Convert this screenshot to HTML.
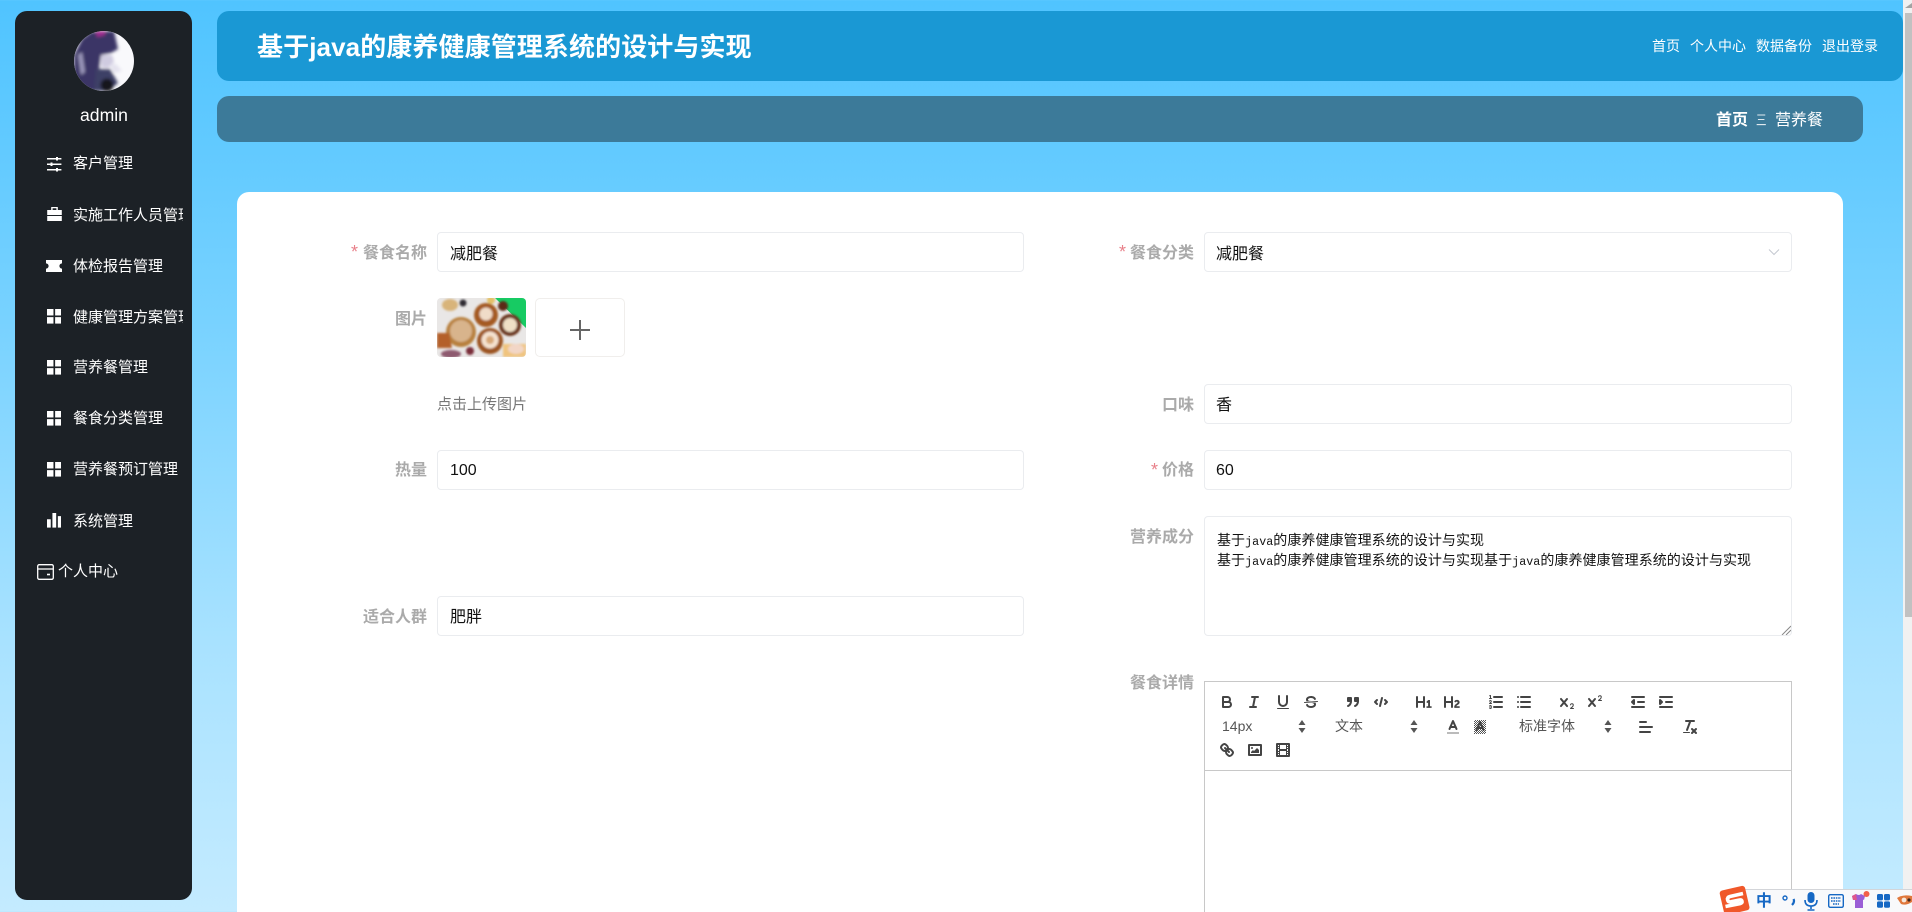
<!DOCTYPE html>
<html lang="zh">
<head>
<meta charset="utf-8">
<title>基于java的康养健康管理系统的设计与实现</title>
<style>
html,body{margin:0;padding:0;width:1912px;height:912px;overflow:hidden}
body{position:relative;background:linear-gradient(180deg,#50c4ff 0,#62caff 150px,#78d2ff 320px,#a8e2ff 640px,#c4ebff 912px);font-family:"Liberation Sans","Noto Sans CJK SC",sans-serif}
.a{position:absolute}
.t{position:absolute;white-space:nowrap;line-height:24px;height:24px}
.side{left:15px;top:11px;width:177px;height:889px;background:#1c2126;border-radius:12px}
.head{left:217px;top:11px;width:1686px;height:70px;background:#1a98d4;border-radius:12px}
.crumb{left:217px;top:96px;width:1646px;height:46px;background:#3c7a99;border-radius:12px}
.card{left:237px;top:192px;width:1606px;height:740px;background:#fff;border-radius:12px}
.m{color:#fff;font-size:15px;left:73px;overflow:hidden;width:110px}
.ic{position:absolute;fill:#fff}
.n{color:#fff;font-size:14px}
.l{color:#aaa;font-size:16px;font-weight:700;text-align:right;width:120px}
.s{color:#e8808a;font-size:18px;font-weight:400}
.i{position:absolute;box-sizing:border-box;background:#fff;border:1px solid #eaecef;border-radius:4px;height:40px;width:588px}
.v{color:#111;font-size:16px}
.q{position:absolute;width:18px;height:18px;fill:none;stroke:#444;stroke-width:2;stroke-linecap:round;stroke-linejoin:round}
.q .f{fill:#444;stroke:none}
.q .th{stroke-width:1}
.p{color:#555;font-size:14px}
.ta{color:#111;font-size:14px;letter-spacing:.05px;font-family:"WenQuanYi Zen Hei","Noto Sans CJK SC",monospace;line-height:22px;height:22px}
.ta b{font-family:"Liberation Mono",monospace;font-weight:400;font-size:11.67px}
</style>
</head>
<body>
<div class="a side"></div>
<div class="a head"></div>
<div class="a crumb"></div>
<div class="a card"></div>

<!-- avatar -->
<svg class="a" style="left:74px;top:31px" width="60" height="60" viewBox="0 0 60 60">
<defs><clipPath id="c"><circle cx="30" cy="30" r="30"/></clipPath><filter id="b1"><feGaussianBlur stdDeviation="1.6"/></filter></defs>
<g clip-path="url(#c)"><rect width="60" height="60" fill="#f9f9fc"/>
<g filter="url(#b1)">
<path d="M17 1L40 0 44 18 37 22 27 24 25 38 22 60H10L0 44 0 24 8 8Z" fill="#3a3566"/>
<path d="M22 0h9v4l-8 2z" fill="#a02a90"/>
<path d="M4 24l4-3 3 20-4 3z" fill="#9c98bc"/>
<path d="M27 24H38L40 31 34 37 27 36Z" fill="#cfcbe0"/>
<path d="M22 38H36L44 52 34 60H20Z" fill="#3d3f66"/>
<path d="M36 34l4 8 8-2-6-7z" fill="#e4e2ee"/>
<circle cx="33" cy="54" r="6.5" fill="#17151f"/>
</g></g>
</svg>
<div class="t" style="left:80px;top:103px;color:#fff;font-size:17.6px">admin</div>

<!-- menu icons -->
<svg class="ic" style="left:47px;top:157px" width="15" height="15" viewBox="0 0 15 15"><rect y="1" width="14.4" height="1.5"/><rect y="6.5" width="14.4" height="1.5"/><rect y="12" width="14.4" height="1.5"/><rect x="9" y="0" width="2" height="3.5"/><rect x="3.5" y="5.5" width="2" height="3.5"/><rect x="9" y="11" width="2" height="3.5"/></svg>
<svg class="ic" style="left:46.5px;top:207px" width="15" height="15" viewBox="0 0 14.6 15"><path d="M4 0h6.6v3h4v5H0V3h4zM5.4 1.3V3h3.8V1.3zM0 9h14.6v5H0z"/></svg>
<svg class="ic" style="left:46px;top:260px" width="16" height="12" viewBox="0 0 16 12"><path d="M0 0h16v3.4a2.6 2.6 0 0 0 0 5.2V12H0V8.6a2.6 2.6 0 0 0 0-5.2z"/></svg>
<svg class="ic" style="left:46.5px;top:309px" width="14.6" height="14.6" viewBox="0 0 14 14"><rect width="6.2" height="6.2"/><rect x="7.8" width="6.2" height="6.2"/><rect y="7.8" width="6.2" height="6.2"/><rect x="7.8" y="7.8" width="6.2" height="6.2"/></svg>
<svg class="ic" style="left:46.5px;top:360px" width="14.6" height="14.6" viewBox="0 0 14 14"><rect width="6.2" height="6.2"/><rect x="7.8" width="6.2" height="6.2"/><rect y="7.8" width="6.2" height="6.2"/><rect x="7.8" y="7.8" width="6.2" height="6.2"/></svg>
<svg class="ic" style="left:46.5px;top:411px" width="14.6" height="14.6" viewBox="0 0 14 14"><rect width="6.2" height="6.2"/><rect x="7.8" width="6.2" height="6.2"/><rect y="7.8" width="6.2" height="6.2"/><rect x="7.8" y="7.8" width="6.2" height="6.2"/></svg>
<svg class="ic" style="left:46.5px;top:462px" width="14.6" height="14.6" viewBox="0 0 14 14"><rect width="6.2" height="6.2"/><rect x="7.8" width="6.2" height="6.2"/><rect y="7.8" width="6.2" height="6.2"/><rect x="7.8" y="7.8" width="6.2" height="6.2"/></svg>
<svg class="ic" style="left:46.5px;top:513px" width="14.6" height="14.6" viewBox="0 0 14 14"><rect y="6" width="3.6" height="8"/><rect x="5.2" width="3.6" height="14"/><rect x="10.4" y="3" width="3.6" height="11"/></svg>
<svg class="a" style="left:37px;top:564px" width="17" height="16" viewBox="0 0 17 16" fill="none" stroke="#fff" stroke-width="1.3"><rect x=".7" y=".7" width="15.6" height="14.6" rx="1.5"/><path d="M.7 5h15.6"/><path d="M10 10.5h3" stroke-width="1.6"/></svg>

<div class="t m" style="top:152px">客户管理</div>
<div class="t m" style="top:204px">实施工作人员管理</div>
<div class="t m" style="top:255px">体检报告管理</div>
<div class="t m" style="top:306px">健康管理方案管理</div>
<div class="t m" style="top:356px">营养餐管理</div>
<div class="t m" style="top:407px">餐食分类管理</div>
<div class="t m" style="top:458px">营养餐预订管理</div>
<div class="t m" style="top:510px">系统管理</div>
<div class="t" style="left:58px;top:560px;color:#fff;font-size:15px">个人中心</div>

<!-- header -->
<div class="a" style="left:257px;top:29px;color:#fff;font-size:26px;letter-spacing:.1px;font-weight:700;line-height:36px;white-space:nowrap">基于java的康养健康管理系统的设计与实现</div>
<div class="t n" style="left:1652px;top:34px">首页</div>
<div class="t n" style="left:1690px;top:34px">个人中心</div>
<div class="t n" style="left:1756px;top:34px">数据备份</div>
<div class="t n" style="left:1822px;top:34px">退出登录</div>

<!-- breadcrumb -->
<div class="t" style="left:1716px;top:109px;color:#fff;font-size:16px;font-weight:700">首页</div>
<div class="t" style="left:1756px;top:108px;color:#dfe9ee;font-size:14px;transform:scaleX(.75);transform-origin:left center">三</div>
<div class="t" style="left:1775px;top:109px;color:#fff;font-size:16px">营养餐</div>

<!-- left form -->
<div class="t s" style="left:351px;top:240px">*</div>
<div class="t l" style="left:307px;top:242px">餐食名称</div>
<div class="i" style="left:437px;top:232px;width:587px"></div>
<div class="t v" style="left:450px;top:243px">减肥餐</div>

<div class="t l" style="left:307px;top:308px">图片</div>
<svg class="a" style="left:437px;top:298px" width="89" height="59" viewBox="0 0 89 59">
<defs><clipPath id="r"><rect width="89" height="59" rx="4"/></clipPath><filter id="b2"><feGaussianBlur stdDeviation="1.1"/></filter></defs>
<g clip-path="url(#r)"><rect width="89" height="59" fill="#e9e7e6"/>
<path d="M58 0H89V30Z" fill="#17cb63"/>
<g filter="url(#b2)">
<ellipse cx="13" cy="7" rx="8" ry="6" fill="#d8b47a"/><circle cx="26" cy="5" r="3.5" fill="#2d2a33"/><circle cx="54" cy="2" r="4" fill="#e4c168"/>
<circle cx="24" cy="34" r="15" fill="#b8803e"/><circle cx="24" cy="33" r="11" fill="#d8b48c"/>
<circle cx="49" cy="17" r="12" fill="#a45a22"/><circle cx="49" cy="16" r="6.5" fill="#f0dcc8"/>
<circle cx="53" cy="43" r="13" fill="#9c5420"/><circle cx="53" cy="42" r="8.5" fill="#f5e2d0"/><circle cx="53" cy="42" r="4" fill="#d8a878"/>
<circle cx="73" cy="27" r="11" fill="#6a361b"/><circle cx="73" cy="27" r="7" fill="#efe0c6"/>
<circle cx="66" cy="8" r="5" fill="#5b2a16"/>
<path d="M0 35h12l3 15H0z" fill="#b4612a"/>
<ellipse cx="14" cy="56" rx="10" ry="4" fill="#8e5a70"/>
<ellipse cx="33" cy="53" rx="4" ry="4" fill="#7a2f3a"/>
<path d="M66 46h23v13H66z" fill="#f0c47e"/><ellipse cx="79" cy="51" rx="8" ry="5" fill="#f2d6c6"/>
</g>
</g>
</svg>
<div class="a" style="left:535px;top:298px;width:90px;height:59px;box-sizing:border-box;border:1px solid #f0eeec;border-radius:5px;background:#fff"></div>
<svg class="a" style="left:569px;top:319px" width="22" height="22" viewBox="0 0 22 22"><path d="M10 1h2v9h9v2h-9v9h-2v-9H1v-2h9z" fill="#666"/></svg>
<div class="t" style="left:437px;top:393px;color:#777;font-size:15px">点击上传图片</div>

<div class="t l" style="left:307px;top:459px">热量</div>
<div class="i" style="left:437px;top:450px;width:587px"></div>
<div class="t v" style="left:450px;top:459px">100</div>

<div class="t l" style="left:307px;top:606px">适合人群</div>
<div class="i" style="left:437px;top:596px;width:587px"></div>
<div class="t v" style="left:450px;top:606px">肥胖</div>

<!-- right form -->
<div class="t s" style="left:1119px;top:240px">*</div>
<div class="t l" style="left:1074px;top:242px">餐食分类</div>
<div class="i" style="left:1204px;top:232px"></div>
<div class="t v" style="left:1216px;top:243px">减肥餐</div>
<svg class="a" style="left:1768px;top:248px" width="12" height="8" viewBox="0 0 12 8" fill="none" stroke="#c4c8d0" stroke-width="1"><path d="M1 1.5l5 5 5-5"/></svg>

<div class="t l" style="left:1074px;top:394px">口味</div>
<div class="i" style="left:1204px;top:384px"></div>
<div class="t v" style="left:1216px;top:394px">香</div>

<div class="t s" style="left:1151px;top:458px">*</div>
<div class="t l" style="left:1074px;top:459px">价格</div>
<div class="i" style="left:1204px;top:450px"></div>
<div class="t v" style="left:1216px;top:459px">60</div>

<div class="t l" style="left:1074px;top:526px">营养成分</div>
<div class="i" style="left:1204px;top:516px;height:120px"></div>
<div class="a ta" style="left:1217px;top:529px;white-space:nowrap">基于<b>java</b>的康养健康管理系统的设计与实现</div>
<div class="a ta" style="left:1217px;top:549px;white-space:nowrap">基于<b>java</b>的康养健康管理系统的设计与实现基于<b>java</b>的康养健康管理系统的设计与实现</div>
<svg class="a" style="left:1781px;top:625px" width="10" height="10" viewBox="0 0 10 10" stroke="#888" stroke-width="1"><path d="M1 10L10 1M5 10l5-5"/></svg>

<div class="t l" style="left:1074px;top:672px">餐食详情</div>
<div class="a" style="left:1204px;top:681px;width:588px;height:260px;box-sizing:border-box;border:1px solid #c8c8c8;border-bottom:0"></div>
<div class="a" style="left:1204px;top:770px;width:588px;height:1px;background:#c8c8c8"></div>

<!-- row 1 -->
<svg class="q" style="left:1218px;top:693px" viewBox="0 0 18 18"><path d="M5,4H9.5A2.5,2.5,0,0,1,12,6.5v0A2.5,2.5,0,0,1,9.5,9H5V4Z"/><path d="M5,9h5.5A2.5,2.5,0,0,1,13,11.5v0A2.5,2.5,0,0,1,10.5,14H5V9Z"/></svg>
<svg class="q" style="left:1245px;top:693px" viewBox="0 0 18 18"><line x1="7" x2="13" y1="4" y2="4"/><line x1="5" x2="11" y1="14" y2="14"/><line x1="8" x2="10" y1="14" y2="4"/></svg>
<svg class="q" style="left:1274px;top:693px" viewBox="0 0 18 18"><path d="M5,3V9a4.012,4.012,0,0,0,4,4H9a4.012,4.012,0,0,0,4-4V3"/><rect class="f" height="1" rx="0.5" ry="0.5" width="12" x="3" y="15"/></svg>
<svg class="q" style="left:1302px;top:693px" viewBox="0 0 18 18"><line class="th" x1="15.5" x2="2.5" y1="8.5" y2="9.5"/><path class="f" d="M9.007,8C6.542,7.791,6,7.519,6,6.5,6,5.792,7.283,5,9,5c1.571,0,2.765.679,2.969,1.309a1,1,0,0,0,1.9-.617C13.356,4.106,11.354,3,9,3,6.2,3,4,4.538,4,6.5a3.2,3.2,0,0,0,.5,1.843Z"/><path class="f" d="M8.984,10C11.457,10.208,12,10.479,12,11.5c0,.708-1.283,1.5-3,1.5-1.571,0-2.765-.679-2.969-1.309a1,1,0,1,0-1.9.617C4.644,13.894,6.646,15,9,15c2.8,0,5-1.538,5-3.5a3.2,3.2,0,0,0-.5-1.843Z"/></svg>
<svg class="q" style="left:1344px;top:693px" viewBox="0 0 18 18"><rect x="4" y="5" width="3" height="3" fill="#444"/><rect x="11" y="5" width="3" height="3" fill="#444"/><path d="M7,8c0,4.031-3,5-3,5"/><path d="M14,8c0,4.031-3,5-3,5"/></svg>
<svg class="q" style="left:1372px;top:693px" viewBox="0 0 18 18"><polyline points="5 7 3 9 5 11"/><polyline points="13 7 15 9 13 11"/><line x1="10" x2="8" y1="5" y2="13"/></svg>
<svg class="q" style="left:1415px;top:693px" viewBox="0 0 18 18"><path class="f" d="M10,4V14a1,1,0,0,1-2,0V10H3v4a1,1,0,0,1-2,0V4A1,1,0,0,1,3,4V8H8V4a1,1,0,0,1,2,0Zm6.06787,9.209H14.98975V7.59863a.54085.54085,0,0,0-.605-.60547h-.62744a1.01119,1.01119,0,0,0-.748.29688L11.645,8.56641a.5435.5435,0,0,0-.022.8584l.28613.30762a.53861.53861,0,0,0,.84717.0332l.09912-.08789a1.2137,1.2137,0,0,0,.2417-.35254h.02246s-.01123.30859-.01123.60547V13.209H12.041a.54085.54085,0,0,0-.605.60547v.43945a.54085.54085,0,0,0,.605.60547h4.02686a.54085.54085,0,0,0,.605-.60547v-.43945A.54085.54085,0,0,0,16.06787,13.209Z"/></svg>
<svg class="q" style="left:1443px;top:693px" viewBox="0 0 18 18"><path class="f" d="M16.73975,13.81445v.43945a.54085.54085,0,0,1-.605.60547H11.855a.58392.58392,0,0,1-.64893-.60547V14.0127c0-2.90527,3.39941-3.42187,3.39941-4.55469a.77675.77675,0,0,0-.84717-.78125,1.17684,1.17684,0,0,0-.83594.38477c-.2749.26367-.561.374-.85791.13184l-.4292-.34082c-.30811-.24219-.38525-.51758-.1543-.81445a2.97155,2.97155,0,0,1,2.45361-1.17676,2.45393,2.45393,0,0,1,2.68408,2.40918c0,2.45312-3.1792,2.92676-3.27832,3.93848h2.79443A.54085.54085,0,0,1,16.73975,13.81445ZM9,3A.99974.99974,0,0,0,8,4V8H3V4A1,1,0,0,0,1,4V14a1,1,0,0,0,2,0V10H8v4a1,1,0,0,0,2,0V4A.99974.99974,0,0,0,9,3Z"/></svg>
<svg class="q" style="left:1487px;top:693px" viewBox="0 0 18 18"><line x1="7" x2="15" y1="4" y2="4"/><line x1="7" x2="15" y1="9" y2="9"/><line x1="7" x2="15" y1="14" y2="14"/><line class="th" x1="2.5" x2="4.5" y1="5.5" y2="5.5"/><path class="f" d="M3.5,6A0.5,0.5,0,0,1,3,5.5V3.085l-0.276.138A0.5,0.5,0,0,1,2.053,3c-0.124-.247-0.023-0.324.224-0.447l1-.5A0.5,0.5,0,0,1,4,2.5v3A0.5,0.5,0,0,1,3.5,6Z"/><path class="th" d="M4.5,10.5h-2c0-.234,1.85-1.076,1.85-2.234A0.959,0.959,0,0,0,2.5,8.156"/><path class="th" d="M2.5,14.846a0.959,0.959,0,0,0,1.85-.109A0.7,0.7,0,0,0,3.75,14a0.688,0.688,0,0,0,.6-0.736,0.959,0.959,0,0,0-1.85-.109"/></svg>
<svg class="q" style="left:1515px;top:693px" viewBox="0 0 18 18"><line x1="6" x2="15" y1="4" y2="4"/><line x1="6" x2="15" y1="9" y2="9"/><line x1="6" x2="15" y1="14" y2="14"/><line x1="3" x2="3" y1="4" y2="4"/><line x1="3" x2="3" y1="9" y2="9"/><line x1="3" x2="3" y1="14" y2="14"/></svg>
<svg class="q" style="left:1558px;top:693px" viewBox="0 0 18 18"><path class="f" d="M15.5,15H13.861a3.858,3.858,0,0,0,1.914-2.975,1.8,1.8,0,0,0-1.6-1.751A1.921,1.921,0,0,0,12.021,11.7a0.50013,0.50013,0,1,0,.957.291h0a0.914,0.914,0,0,1,1.053-.725,0.81,0.81,0,0,1,.744.762c0,1.076-1.16971,1.86982-1.93971,2.43082A1.45639,1.45639,0,0,0,12,15.5a0.5,0.5,0,0,0,.5.5h3A0.5,0.5,0,0,0,15.5,15Z"/><path class="f" d="M9.65,5.241a1,1,0,0,0-1.409.108L6,7.964,3.759,5.349A1,1,0,0,0,2.192,6.59178Q2.21541,6.6213,2.241,6.649L4.684,9.5,2.241,12.35A1,1,0,0,0,3.71,13.70722q0.02557-.02768.049-0.05722L6,11.036,8.241,13.65a1,1,0,1,0,1.567-1.24277Q9.78459,12.3777,9.759,12.35L7.316,9.5,9.759,6.651A1,1,0,0,0,9.65,5.241Z"/></svg>
<svg class="q" style="left:1586px;top:693px" viewBox="0 0 18 18"><path class="f" d="M15.5,7H13.861a4.015,4.015,0,0,0,1.914-2.975,1.8,1.8,0,0,0-1.6-1.751A1.922,1.922,0,0,0,12.021,3.7a0.5,0.5,0,1,0,.957.291,0.917,0.917,0,0,1,1.053-.725,0.81,0.81,0,0,1,.744.762c0,1.077-1.164,1.925-1.934,2.486A1.423,1.423,0,0,0,12,7.5a0.5,0.5,0,0,0,.5.5h3A0.5,0.5,0,0,0,15.5,7Z"/><path class="f" d="M9.651,5.241a1,1,0,0,0-1.41.108L6,7.964,3.759,5.349a1,1,0,1,0-1.519,1.3L4.683,9.5,2.241,12.35a1,1,0,1,0,1.519,1.3L6,11.036l2.241,2.615a1,1,0,0,0,1.519-1.3L7.317,9.5,9.759,6.651A1,1,0,0,0,9.651,5.241Z"/></svg>
<svg class="q" style="left:1629px;top:693px" viewBox="0 0 18 18"><line x1="3" x2="15" y1="14" y2="14"/><line x1="3" x2="15" y1="4" y2="4"/><line x1="9" x2="15" y1="9" y2="9"/><polyline fill="#444" points="5 7 5 11 3 9 5 7"/></svg>
<svg class="q" style="left:1657px;top:693px" viewBox="0 0 18 18"><line x1="3" x2="15" y1="14" y2="14"/><line x1="3" x2="15" y1="4" y2="4"/><line x1="9" x2="15" y1="9" y2="9"/><polyline fill="#444" points="3 7 3 11 5 9 3 7"/></svg>

<!-- row 2 -->
<div class="t p" style="left:1222px;top:714px">14px</div>
<div class="t p" style="left:1335px;top:714px">文本</div>
<div class="t p" style="left:1519px;top:714px">标准字体</div>
<svg class="a" style="left:1298px;top:720px" width="8" height="13" viewBox="0 0 8 13"><path d="M4 0l3.5 5H.5zM4 13L.5 8h7z" fill="#555"/></svg>
<svg class="a" style="left:1410px;top:720px" width="8" height="13" viewBox="0 0 8 13"><path d="M4 0l3.5 5H.5zM4 13L.5 8h7z" fill="#555"/></svg>
<svg class="a" style="left:1604px;top:720px" width="8" height="13" viewBox="0 0 8 13"><path d="M4 0l3.5 5H.5zM4 13L.5 8h7z" fill="#555"/></svg>
<svg class="q" style="left:1444px;top:718px" viewBox="0 0 18 18"><line x1="3" x2="15" y1="15" y2="15" stroke="#bbb" stroke-linecap="butt"/><polyline points="5.5 11 9 3 12.5 11"/><line x1="11.63" x2="6.38" y1="9" y2="9"/></svg>
<svg class="q" style="left:1471px;top:718px" viewBox="0 0 18 18"><defs><pattern id="ck" width="2" height="2" patternUnits="userSpaceOnUse"><rect width="1" height="1" fill="#555" stroke="none"/><rect x="1" y="1" width="1" height="1" fill="#555" stroke="none"/></pattern></defs><rect x="3" y="2" width="12" height="14" fill="url(#ck)" stroke="none"/><polyline points="5.5 12 9 4 12.5 12"/><line x1="11.63" x2="6.38" y1="10" y2="10"/></svg>
<svg class="q" style="left:1637px;top:718px" viewBox="0 0 18 18"><line x1="3" x2="15" y1="9" y2="9"/><line x1="3" x2="13" y1="14" y2="14"/><line x1="3" x2="9" y1="4" y2="4"/></svg>
<svg class="q" style="left:1681px;top:718px" viewBox="0 0 18 18"><line x1="5" x2="13" y1="3" y2="3"/><line x1="6" x2="9.35" y1="12" y2="3"/><line x1="11" x2="15" y1="11" y2="15"/><line x1="15" x2="11" y1="11" y2="15"/><rect class="f" height="1" rx="0.5" ry="0.5" width="7" x="2" y="14"/></svg>

<!-- row 3 -->
<svg class="q" style="left:1218px;top:741px" viewBox="0 0 18 18"><line x1="7" x2="11" y1="7" y2="11"/><path d="M8.9,4.577a3.476,3.476,0,0,1,.36,4.679A3.476,3.476,0,0,1,4.577,8.9C3.185,7.5,2.035,6.4,4.217,4.217S7.5,3.185,8.9,4.577Z"/><path d="M13.423,9.1a3.476,3.476,0,0,0-4.679-.36,3.476,3.476,0,0,0,.36,4.679c1.392,1.392,2.5,2.542,4.679.36S14.815,10.5,13.423,9.1Z"/></svg>
<svg class="q" style="left:1246px;top:741px" viewBox="0 0 18 18"><rect height="10" width="12" x="3" y="4"/><circle class="f" cx="6" cy="7" r="1"/><polyline class="f" points="5 12 5 11 7 9 8 10 11 7 13 9 13 12 5 12"/></svg>
<svg class="q" style="left:1274px;top:741px" viewBox="0 0 18 18"><rect height="12" width="12" x="3" y="3"/><rect class="f" height="12" width="1" x="5" y="3"/><rect class="f" height="12" width="1" x="12" y="3"/><rect class="f" height="2" width="8" x="5" y="8"/><rect class="f" height="1" width="3" x="3" y="5"/><rect class="f" height="1" width="3" x="3" y="7"/><rect class="f" height="1" width="3" x="3" y="10"/><rect class="f" height="1" width="3" x="3" y="12"/><rect class="f" height="1" width="3" x="12" y="5"/><rect class="f" height="1" width="3" x="12" y="7"/><rect class="f" height="1" width="3" x="12" y="10"/><rect class="f" height="1" width="3" x="12" y="12"/></svg>

<!-- scrollbar -->
<div class="a" style="left:1903px;top:0;width:9px;height:912px;background:#f1f1f1"></div>
<div class="a" style="left:1905px;top:13px;width:7px;height:604px;background:#c1c1c1"></div>
<svg class="a" style="left:1905px;top:2px" width="7" height="7" viewBox="0 0 7 7"><path d="M0 6l7-5v5z" fill="#a3a3a3"/></svg>

<!-- IME bar -->
<div class="a" style="left:1735px;top:889px;width:177px;height:23px;background:#f8f9fb;border-top:1px solid #d3d5d9;box-sizing:border-box"></div>
<svg class="a" style="left:1719px;top:885px" width="32" height="27" viewBox="0 0 32 27">
<rect x="2.5" y="3" width="26" height="25" rx="3" transform="rotate(-13 15 15)" fill="#f0582a"/>
<path d="M24 8.5L11 11.5q-3 .8-2.4 3.3t3.4 2l8-1.7q2.6-.5 3 1.2t-2 2.3L6.5 21.5" fill="none" stroke="#fff" stroke-width="3.6"/>
</svg>
<div class="a" style="left:1756px;top:892px;color:#1668c4;font-size:16px;font-weight:700;line-height:20px">中</div>
<svg class="a" style="left:1782px;top:894px" width="14" height="14" viewBox="0 0 14 14"><circle cx="3" cy="4" r="2" fill="none" stroke="#1668c4" stroke-width="1.4"/><path d="M11.5 5q1.5 3-1.5 6" fill="none" stroke="#1668c4" stroke-width="2.2"/></svg>
<svg class="a" style="left:1804px;top:892px" width="14" height="20" viewBox="0 0 14 20"><rect x="3.5" y="0" width="7" height="11" rx="3.5" fill="#1668c4"/><path d="M1 8q0 6 6 6t6-6M7 14v3M3.5 18h7" fill="none" stroke="#1668c4" stroke-width="1.6"/></svg>
<svg class="a" style="left:1828px;top:894px" width="16" height="14" viewBox="0 0 16 14"><rect x=".7" y=".7" width="14.6" height="12.6" rx="1.5" fill="none" stroke="#1668c4" stroke-width="1.4"/><path d="M3 4h10M3 7h10M5 10h6" stroke="#1668c4" stroke-width="1.6" stroke-dasharray="1.6 .8"/></svg>
<svg class="a" style="left:1851px;top:891px" width="20" height="19" viewBox="0 0 20 19"><path d="M1 5l4-2q3 2 5 0l4 2-1 4-1-.5V17H4V8.5L2 9z" fill="#9a5ed6"/><path d="M1 5l4-2 1 6-2 0L2 9z" fill="#e0588c"/><circle cx="15.5" cy="3" r="3" fill="#f2604a"/></svg>
<svg class="a" style="left:1877px;top:894px" width="13" height="14" viewBox="0 0 13 14"><rect width="6" height="6.4" rx="1.5" fill="#1668c4"/><rect x="7" width="6" height="6.4" rx="1.5" fill="#1668c4"/><rect y="7.4" width="6" height="6.4" rx="1.5" fill="#1668c4"/><rect x="7" y="7.4" width="6" height="6.4" rx="1.5" fill="#1668c4"/></svg>
<svg class="a" style="left:1897px;top:895px" width="15" height="12" viewBox="0 0 15 12"><path d="M0 3q6-4 15-2v6q-6 4-11 2z" fill="#e0783c"/><circle cx="7" cy="5" r="2.4" fill="#f5e8dc"/><circle cx="12" cy="5" r="1.6" fill="#3d2a20"/></svg>
</body>
</html>
